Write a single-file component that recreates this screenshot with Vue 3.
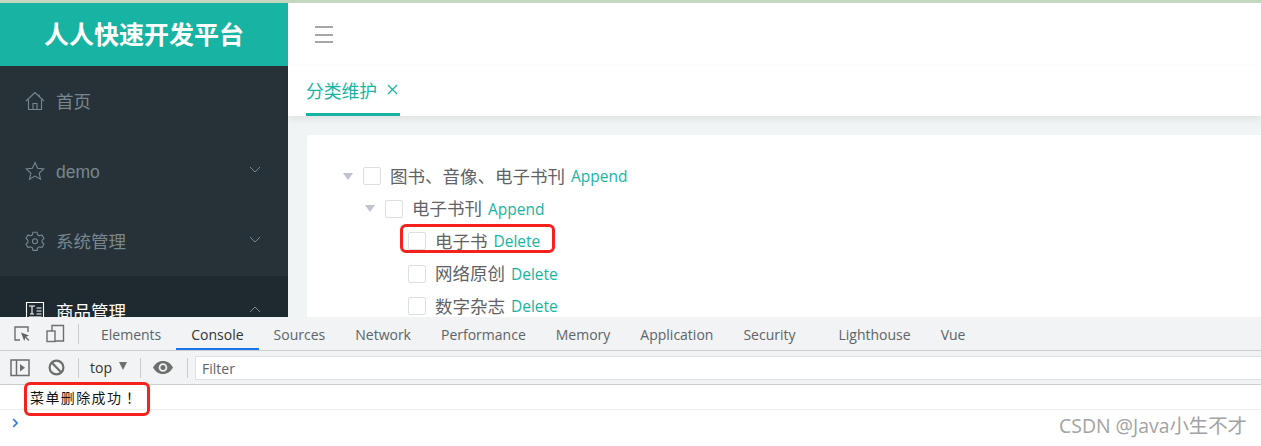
<template>
  <div class="screen">
    <div class="top-strip"></div>

    <div class="app">
      <aside class="sidebar">
        <div class="logo">人人快速开发平台</div>
        <ul class="menu">
          <li v-for="item in menu" :key="item.label" class="menu-item" :class="{ open: item.open }">
            <svg class="menu-icon" viewBox="0 0 20 20" fill="none" stroke="currentColor" stroke-width="1.1">
              <path v-for="d in item.paths" :key="d" :d="d" />
            </svg>
            <span class="menu-label" :class="{ latin: item.label === 'demo' }">{{ item.label }}</span>
            <svg v-if="item.arrow" class="menu-arrow" viewBox="0 0 12 7" fill="none" stroke="currentColor" stroke-width="1">
              <path :d="item.open ? 'M1 6l5-5 5 5' : 'M1 1l5 5 5-5'" />
            </svg>
          </li>
        </ul>
      </aside>

      <main class="main">
        <div class="navbar">
          <div class="hamburger"><i></i><i></i><i></i></div>
        </div>
        <div class="tabs">
          <div class="tab">
            分类维护
            <svg class="tab-close" viewBox="0 0 11 11" fill="none" stroke="#17b3a3" stroke-width="1.2">
              <path d="M1 1l9 9M10 1l-9 9" />
            </svg>
          </div>
        </div>
        <div class="content">
          <div class="card">
            <div v-for="node in tree" :key="node.label" class="tree-row" :class="'level-' + node.level">
              <span v-if="node.caret" class="caret"></span>
              <span class="checkbox"></span>
              <span class="node-label">{{ node.label }}</span>
              <a class="node-action">{{ node.action }}</a>
            </div>
          </div>
        </div>
      </main>
    </div>

    <section class="devtools">
      <div class="dt-tabs">
        <svg class="dt-icon inspect" viewBox="0 0 18 18" fill="none" stroke="#6e6e6e" stroke-width="1.4">
          <path d="M7 15H2V2h13v5" />
          <path d="M8 7.5l8 3-3.3 1.4L11.2 16z" fill="#5f6368" stroke="none" />
          <path d="M12.5 12l3.4 3.6" />
        </svg>
        <svg class="dt-icon device" viewBox="0 0 19 19" fill="none" stroke="#6e6e6e" stroke-width="1.4">
          <path d="M6 7V1.5h11.5V17H9" />
          <rect x="1" y="7" width="8" height="10.5" />
        </svg>
        <span class="dt-sep"></span>
        <span
          v-for="tab in dtTabs"
          :key="tab"
          class="dt-tab"
          :class="{ active: tab === 'Console', lighthouse: tab === 'Lighthouse' }"
        >{{ tab }}</span>
      </div>

      <div class="dt-toolbar">
        <svg class="tool-icon toggle" viewBox="0 0 20 18" fill="none" stroke="#6e6e6e" stroke-width="1.5">
          <rect x="1" y="1" width="18" height="15.5" />
          <path d="M6.5 1v15.5" />
          <path d="M10 5l5 3.8-5 3.8z" fill="#6e6e6e" stroke="none" />
        </svg>
        <svg class="tool-icon ban" viewBox="0 0 17 17" fill="none" stroke="#6e6e6e" stroke-width="2.2">
          <circle cx="8.5" cy="8.5" r="6.9" />
          <path d="M3.8 3.8l9.4 9.4" />
        </svg>
        <span class="tool-sep first"></span>
        <span class="context">top</span>
        <span class="context-caret"></span>
        <span class="tool-sep"></span>
        <svg class="tool-icon eye" viewBox="0 0 20 13" fill="#6e6e6e">
          <path d="M10 0C5.5 0 2 2.700 0 6.500 2 10.300 5.500 13 10 13s8-2.700 10-6.500C18 2.700 14.500 0 10 0zm0 10.800a4.300 4.300 0 1 1 0-8.600 4.300 4.300 0 0 1 0 8.600z" />
          <circle cx="10" cy="6.500" r="2.500" />
        </svg>
        <span class="tool-sep"></span>
        <div class="filter">Filter</div>
      </div>

      <div class="log-row">菜单删除成功<span class="bang">！</span></div>
      <div class="prompt">
        <svg viewBox="0 0 7 10" fill="none" stroke="#2f7de1" stroke-width="1.8">
          <path d="M1.200 1l3.800 4-3.800 4" />
        </svg>
      </div>
    </section>

    <!-- hand-drawn red marks on top of the screenshot -->
    <div class="mark mark-tree"></div>
    <div class="mark mark-log"></div>
    <div class="watermark">CSDN @Java小生不才</div>
  </div>
</template>

<script setup>
const menu = [
  {
    label: '首页',
    paths: ['M1 10L10 1.500 19 10', 'M3.500 8.500V18.500H16.500V8.500', 'M8 18.500V12.500H12V18.500', 'M14 3.500V6'],
  },
  {
    label: 'demo',
    arrow: true,
    paths: ['M10 1.500l2.600 5.700 6.200.7-4.600 4.200 1.300 6.100L10 15.100l-5.500 3.100 1.300-6.100L1.200 7.900l6.200-.7z'],
  },
  {
    label: '系统管理',
    arrow: true,
    paths: [
      'M8 1.200h4l.6 2.600 1.900 1 2.500-.8 2 3.400-1.900 1.800v2.200l1.900 1.800-2 3.400-2.500-.8-1.900 1-.6 2.600H8l-.6-2.600-1.900-1-2.500.8-2-3.400 1.900-1.800V9.200L1 7.400 3 4l2.500.8 1.900-1z',
      'M12.500 10.300a2.500 2.500 0 1 1-5 0 2.500 2.500 0 0 1 5 0z',
    ],
  },
  {
    label: '商品管理',
    arrow: true,
    open: true,
    paths: ['M1.500 1.500h17v17h-17z', 'M4 5h6M7 5v8M5 13h4', 'M11.500 7h5M11.500 10h5M11.500 13h5', 'M4 16h12.500'],
  },
]

const tree = [
  { label: '图书、音像、电子书刊', action: 'Append', level: 0, caret: true },
  { label: '电子书刊', action: 'Append', level: 1, caret: true },
  { label: '电子书', action: 'Delete', level: 2 },
  { label: '网络原创', action: 'Delete', level: 2 },
  { label: '数字杂志', action: 'Delete', level: 2 },
]

const dtTabs = [
  'Elements',
  'Console',
  'Sources',
  'Network',
  'Performance',
  'Memory',
  'Application',
  'Security',
  'Lighthouse',
  'Vue',
]
</script>

<style>
html,
body {
  margin: 0;
  overflow: hidden;
  background: #fff;
}
</style>

<style scoped>
.screen {
  position: relative;
  display: flex;
  flex-direction: column;
  width: 1261px;
  height: 446px;
  overflow: hidden;
  font-family: "Noto Sans CJK SC", "Open Sans", sans-serif;
}

.top-strip {
  height: 3px;
  flex: none;
  background: #c3d8bf;
}

.app {
  display: flex;
  height: 314px;
  flex: none;
  overflow: hidden;
}

/* sidebar */
.sidebar {
  width: 288px;
  flex: none;
  background: #263238;
}

.logo {
  height: 63px;
  line-height: 61px;
  text-align: center;
  background: #17b3a3;
  color: #fff;
  font-size: 25px;
  font-weight: 700;
}

.menu {
  list-style: none;
  margin: 0;
  padding: 0;
}

.menu-item {
  display: flex;
  align-items: center;
  height: 70px;
  padding: 0 26px 0 25px;
  color: #78878f;
  font-size: 17.5px;
}

.menu-item.open {
  background: #1f2a30;
  color: #fff;
}

.menu-icon {
  width: 20px;
  height: 20px;
  flex: none;
  margin-right: 11px;
}

.menu-label {
  flex: 1;
  padding-bottom: 2px;
  font-family: "Liberation Sans", "Noto Sans CJK SC", sans-serif;
}

.menu-label.latin {
  padding: 2px 0 0;
}

.menu-arrow {
  width: 12px;
  height: 7px;
  margin-right: 1px;
  margin-top: -4px;
  color: #78878f;
}

/* main */
.main {
  flex: 1;
  min-width: 0;
  display: flex;
  flex-direction: column;
  background: #f0f4f5;
}

.navbar {
  height: 63px;
  flex: none;
  display: flex;
  align-items: center;
  padding-left: 27px;
  background: #fff;
}

.hamburger {
  display: flex;
  flex-direction: column;
  gap: 5.500px;
  width: 18px;
}

.hamburger i {
  display: block;
  height: 2px;
  background: #a5a6ae;
}

.tabs {
  position: relative;
  height: 50px;
  flex: none;
  padding-left: 18px;
  background: #fff;
  box-shadow: 0 3px 8px rgba(0, 0, 0, 0.08);
}

.tab {
  display: flex;
  align-items: center;
  gap: 10px;
  box-sizing: border-box;
  width: 94px;
  height: 50px;
  border-bottom: 3px solid #17b3a3;
  color: #17b3a3;
  font-size: 17.800px;
  white-space: nowrap;
}

.tab-close {
  width: 11px;
  height: 11px;
  flex: none;
}

.content {
  flex: 1;
  padding: 19px 0 0 19px;
}

.card {
  height: 300px;
  padding: 25px 0 0 36px;
  background: #fff;
  border-radius: 4px 0 0 0;
}

.tree-row {
  display: flex;
  align-items: center;
  height: 32.500px;
  color: #606266;
  font-size: 17.500px;
  white-space: nowrap;
}

.level-1 {
  padding-left: 22px;
}

.level-2 {
  padding-left: 65px;
}

.caret {
  width: 0;
  height: 0;
  margin-right: 10px;
  border-style: solid;
  border-width: 7px 5px 0;
  border-color: #c0c4cc transparent transparent;
}

.checkbox {
  box-sizing: border-box;
  width: 18px;
  height: 18px;
  flex: none;
  margin-right: 9px;
  border: 1px solid #dcdfe6;
  border-radius: 2px;
  background: #fff;
}

.node-label {
  margin-right: 6px;
  padding-bottom: 2px;
}

.node-action {
  color: #17b3a3;
  font-family: "Open Sans", sans-serif;
  font-size: 15.500px;
}

/* devtools */
.devtools {
  flex: 1;
  display: flex;
  flex-direction: column;
  background: #fff;
  font-family: "Open Sans", "Noto Sans CJK SC", sans-serif;
}

.dt-tabs {
  display: flex;
  align-items: center;
  box-sizing: border-box;
  height: 34px;
  flex: none;
  padding-left: 13px;
  background: #f1f3f4;
  border-bottom: 1px solid #cbcdd1;
}

.dt-icon {
  flex: none;
}

.inspect {
  width: 18px;
  height: 18px;
}

.device {
  width: 19px;
  height: 19px;
  margin-left: 15px;
}

.dt-sep {
  width: 1px;
  height: 20px;
  margin: 0 7px 0 13px;
  background: #ccc;
}

.dt-tab {
  box-sizing: border-box;
  height: 33px;
  padding: 0 15px;
  line-height: 36px;
  color: #5f6368;
  font-size: 14px;
  white-space: nowrap;
}

.dt-tab.active {
  color: #333;
  border-bottom: 2px solid #1a73e8;
}

.dt-tab.lighthouse {
  margin-left: 13px;
}

.dt-toolbar {
  display: flex;
  align-items: center;
  box-sizing: border-box;
  height: 34px;
  flex: none;
  padding-left: 10px;
  background: #f1f3f4;
  border-bottom: 1px solid #cbcdd1;
}

.tool-icon {
  flex: none;
}

.toggle {
  width: 20px;
  height: 18px;
}

.ban {
  width: 17px;
  height: 17px;
  margin-left: 18px;
}

.tool-sep {
  width: 1px;
  height: 20px;
  background: #ccc;
}

.tool-sep.first {
  margin: 0 11px 0 13px;
}

.context {
  color: #333;
  font-size: 14px;
}

.context-caret {
  width: 0;
  height: 0;
  margin: -3px 13px 0 7px;
  border-style: solid;
  border-width: 8px 4.500px 0;
  border-color: #6e6e6e transparent transparent;
}

.eye {
  width: 20px;
  height: 13px;
  margin: 0 14px 0 12px;
}

.filter {
  flex: 1;
  box-sizing: border-box;
  height: 24px;
  margin-left: 7px;
  padding-left: 6px;
  line-height: 23px;
  color: #5f6368;
  font-size: 14px;
  background: #fff;
  border: 1px solid #dfe1e5;
  border-right: 0;
}

.log-row {
  box-sizing: border-box;
  height: 25px;
  flex: none;
  padding-left: 30px;
  line-height: 25px;
  color: #111;
  font-family: "Noto Sans CJK SC", sans-serif;
  font-size: 14px;
  letter-spacing: 1.400px;
  border-bottom: 1px solid #eee;
}

.bang {
  font-family: "Noto Sans CJK TC", sans-serif;
}

.prompt {
  padding: 8px 0 0 12px;
}

.prompt svg {
  display: block;
  width: 7px;
  height: 10px;
}

.mark {
  position: absolute;
  box-sizing: border-box;
  border: 3px solid #f5211b;
  border-radius: 6px;
}

.mark-tree {
  left: 400px;
  top: 224px;
  width: 155px;
  height: 29px;
}

.mark-log {
  left: 24px;
  top: 382px;
  width: 126px;
  height: 34px;
}

.watermark {
  position: absolute;
  right: 14px;
  top: 410px;
  color: #a3a3a3;
  font-family: "Open Sans", "Noto Sans CJK SC", sans-serif;
  font-size: 19.400px;
  white-space: nowrap;
}
</style>
